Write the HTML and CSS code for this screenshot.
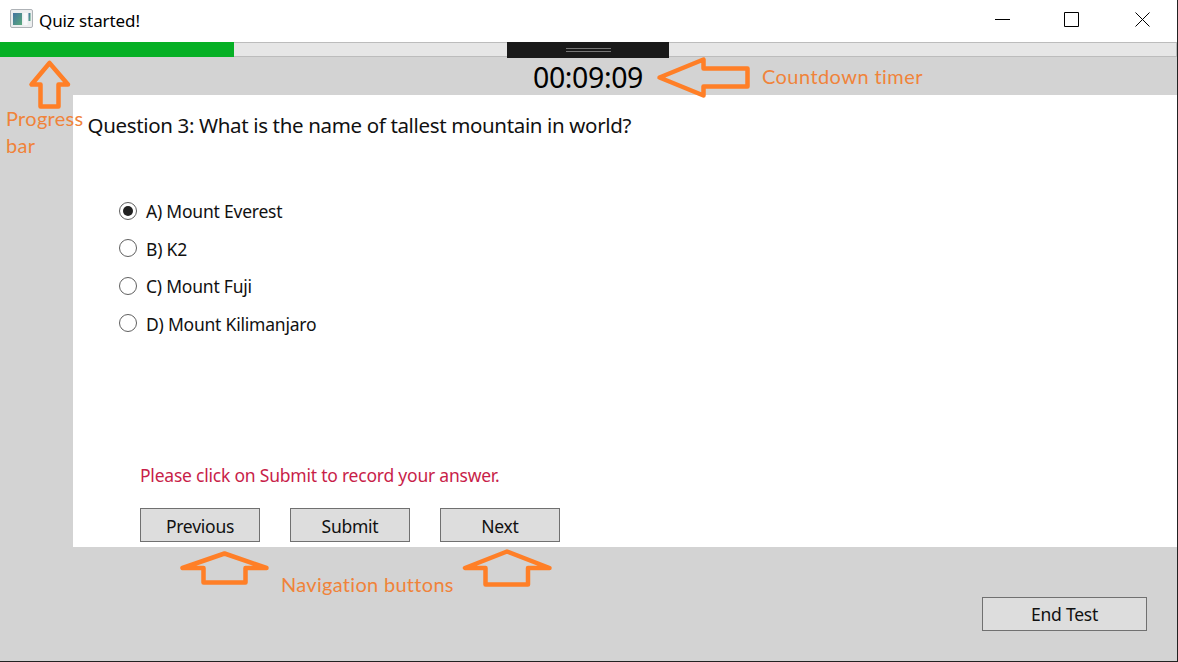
FILE: index.html
```html
<!DOCTYPE html>
<html lang="en">
<head>
<meta charset="utf-8">
<title>Quiz started!</title>
<link rel="stylesheet" href="styles.css">
</head>
<body>
<div class="window">
  <header class="titlebar">
    <svg class="app-icon" width="23" height="19" viewBox="0 0 23 19">
      <defs><linearGradient id="pane" x1="0" y1="0" x2="1" y2="1"><stop offset="0" stop-color="#4273a0"/><stop offset="1" stop-color="#5aaa7c"/></linearGradient></defs>
      <rect x=".5" y=".5" width="22" height="18" rx="1.5" fill="#eceeef" stroke="#aeb2b6"/>
      <rect x="3" y="4" width="9" height="12" fill="url(#pane)"/>
      <rect x="13.5" y="4" width="4" height="12" fill="#f8f9fb"/>
      <rect x="18.5" y="4" width="2" height="8" fill="url(#pane)"/>
    </svg>
    <h1 class="title">Quiz started!</h1>
    <svg class="controls" width="156" height="16" viewBox="0 0 156 16" fill="none" stroke="#000">
      <path d="M0 7.500H15M69.500 .5H83.500V14.500H69.500Z"/>
      <path d="M140.500 .5L154.500 14.500M154.500 .5L140.500 14.500"/>
    </svg>
  </header>
  <div class="progress"><div class="progress-fill" style="width:234.400px"></div></div>
  <div class="timer-bar"><time class="timer">00:09:09</time></div>
  <main class="content">
    <h2 class="question">Question 3: What is the name of tallest mountain in world?</h2>
    <div class="options">
      <label class="option"><span class="radio checked"></span><span class="label">A) Mount Everest</span></label>
      <label class="option"><span class="radio"></span><span class="label">B) K2</span></label>
      <label class="option"><span class="radio"></span><span class="label">C) Mount Fuji</span></label>
      <label class="option"><span class="radio"></span><span class="label">D) Mount Kilimanjaro</span></label>
    </div>
    <p class="message">Please click on Submit to record your answer.</p>
    <div class="nav">
      <button class="button">Previous</button>
      <button class="button">Submit</button>
      <button class="button">Next</button>
    </div>
  </main>
  <footer class="footer"><button class="button end">End Test</button></footer>
  <div class="grip"><span class="grip-lines"></span></div>
  <svg class="arrows" width="1178" height="662" viewBox="0 0 1178 662">
    <path d="M49.500 63L31.500 84.500H40.500V106.500H58.500V84.500H68L49.500 63Z"/>
    <path d="M659.500 77.500L703.500 59.500V68.500H747.500V86.500H703.500V95.500L659.500 77.500Z"/>
    <path d="M224.500 553.500L182.500 568H203.500V582.500H245.500V568H266.500L224.500 553.500Z"/>
    <path d="M507 551.500L465 568H485.500V584.500H528V568H549.500L507 551.500Z"/>
  </svg>
  <span class="note note-progress">Progress<br>bar</span>
  <span class="note note-timer">Countdown timer</span>
  <span class="note note-nav">Navigation buttons</span>
</div>
</body>
</html>
```
FILE: styles.css
```css
* { box-sizing: border-box; }
body { margin: 0; font-family: "Noto Sans", sans-serif; color: #111; }
.window {
  position: relative; width: 1178px; height: 662px; overflow: hidden;
  display: flex; flex-direction: column; background: #d3d3d3;
  border-right: 1px solid #222; border-bottom: 1px solid #222;
}
h1, h2, p { margin: 0; font-weight: 400; white-space: nowrap; }
.titlebar { height: 42px; flex: none; background: #fff; display: flex; align-items: flex-start; padding: 9px 26px 0 10px; }
.title { font-size: 17px; line-height: 24px; margin-left: 6px; letter-spacing: -.1px; color: #000; }
.controls { margin: 3px 0 0 auto; }
.progress { height: 15px; flex: none; background: #e6e6e6; border: solid #bcbcbc; border-width: 1px 1px 1px 0; }
.progress-fill { height: 15px; margin-top: -1px; background: #06b025; position: relative; }
.timer-bar { height: 38px; flex: none; display: flex; justify-content: center; padding-right: 1px; }
.timer { font-size: 28.500px; line-height: 41px; letter-spacing: -.4px; color: #000; }
.content { height: 452px; flex: none; margin-left: 72.500px; background: #fff; display: flex; flex-direction: column; }
.question { font-size: 20.500px; line-height: 28px; padding: 16px 0 0 15px; letter-spacing: -.35px; }
.options { display: grid; grid-auto-rows: 37.500px; margin: 53px 0 0 46.500px; }
.option { display: flex; align-items: center; }
.radio { width: 18px; height: 18px; border: 1px solid #606060; border-radius: 50%; background: #fff; display: grid; place-items: center; }
.checked::after { content: ""; width: 10px; height: 10px; border-radius: 50%; background: #212121; }
.label { font-size: 17.500px; margin-left: 9px; padding-top: 1px; letter-spacing: -.22px; }
.message { font-size: 17.500px; line-height: 24px; letter-spacing: -.22px; color: #c81e49; margin: 121px 0 0 67.500px; }
.nav { display: flex; gap: 30px; margin: 21px 0 0 67.500px; }
.button { width: 120px; height: 34px; padding: 1px 0 0; border: 1px solid #707070; background: #ddd; font: 17.500px "Noto Sans", sans-serif; letter-spacing: -.25px; color: #111; }
.footer { flex: 1; display: flex; justify-content: flex-end; padding: 50px 30px 0 0; }
.end { width: 165px; padding: 0; }
.grip { position: absolute; left: 507px; top: 42px; width: 162px; height: 16px; background: #1a1a1a; display: grid; place-items: center; }
.grip-lines { width: 45px; height: 4px; border: solid #777; border-width: 1px 0; }
.arrows { position: absolute; left: 0; top: 0; fill: none; stroke: #ff7f27; stroke-width: 4.500; stroke-linejoin: round; }
.note { position: absolute; font-family: Lato, sans-serif; font-size: 20px; line-height: 27px; color: #f0833a; white-space: nowrap; letter-spacing: .3px; }
.note-progress { left: 6px; top: 105px; }
.note-timer { left: 762px; top: 63px; letter-spacing: .43px; }
.note-nav { left: 281px; top: 571px; }
```
